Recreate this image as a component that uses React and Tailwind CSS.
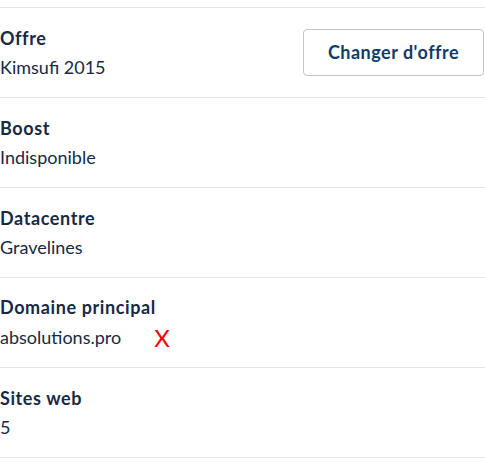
import React from "react";

const rows = [
  { title: "Offre", value: "Kimsufi 2015", button: true },
  { title: "Boost", value: "Indisponible" },
  { title: "Datacentre", value: "Gravelines" },
  { title: "Domaine principal", value: "absolutions.pro", x: true },
  { title: "Sites web", value: "5" },
];

export default function App() {
  return (
    <div className="w-[485px] h-[463px] bg-white pt-[7px]" style={{ fontFamily: "Lato, 'Liberation Sans', sans-serif" }}>
      <div className="border-t border-[#e5e5e5]">
        {rows.map((r) => (
          <div key={r.title} className="flex items-center justify-between border-b border-[#e5e5e5] h-[90px]">
            <div className="flex flex-col">
              <div className="text-[18px] leading-6 font-bold tracking-[0.6px] text-[#172a45]">{r.title}</div>
              <div className="flex items-center mt-[5px]">
                <span className="text-[18px] leading-6 text-[#172a45]">{r.value}</span>
                {r.x && (
                  <span className="ml-[33px] mt-[2px] text-[24px] leading-6 text-[#ff0000]">X</span>
                )}
              </div>
            </div>
            {r.button && (
              <button className="w-[181px] h-[47px] mr-px border border-[#c4c4c4] rounded text-[18px] font-bold tracking-[0.5px] text-[#123b6b] bg-white">
                Changer d'offre
              </button>
            )}
          </div>
        ))}
      </div>
    </div>
  );
}
